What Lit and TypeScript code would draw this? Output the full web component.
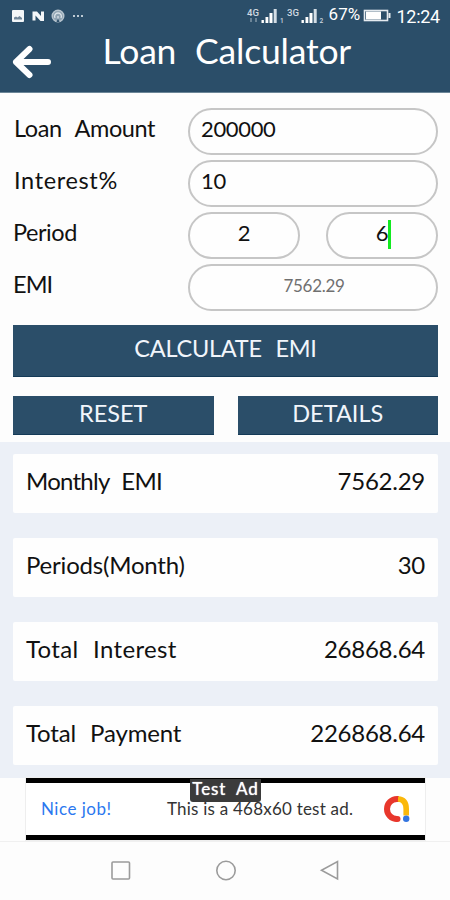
import { LitElement, html, css, svg } from "lit";
import { customElement } from "lit/decorators.js";

const results = [
  { label: "Monthly EMI", value: "7562.29", cls: "r1" },
  { label: "Periods(Month)", value: "30", cls: "r2" },
  { label: "Total Interest", value: "26868.64", cls: "r3" },
  { label: "Total Payment", value: "226868.64", cls: "r4" },
];

const signal = (x: number) => svg`
  <g fill="#fff">
    <rect x=${x} y="20" width="2.4" height="3"/>
    <rect x=${x + 4} y="17" width="2.8" height="6"/>
    <rect x=${x + 8} y="13" width="3" height="10"/>
    <rect x=${x + 12.2} y="9" width="3" height="14" fill="#d3dde5"/>
  </g>`;

@customElement("app-root")
export class AppRoot extends LitElement {
  static styles = css`
    :host { display: block; width: 450px; height: 900px; overflow: hidden; background: #fdfdfd;
      font-family: Lato, "Liberation Sans", sans-serif; color: #111; }
    * { box-sizing: border-box; }
    svg { display: block; }
    span, h1 { white-space: pre; }
    header { height: 93px; background: #2b4e69; border-bottom: 1px solid #6c8698; color: #fff; }
    .status { height: 30px; display: flex; position: relative; }
    .pct, .clock { position: absolute; line-height: 20px; font-family: Roboto, sans-serif; }
    .pct { left: 328.5px; top: 4px; font-size: 17px; letter-spacing: .1px; }
    .clock { left: 396.5px; top: 7px; font-size: 18px; letter-spacing: -.3px; }
    .bar { display: flex; height: 62px; padding-left: 12px; }
    .back { margin-top: 15px; width: 40px; height: 34px; }
    h1 { margin: 0 0 0 50.5px; font-weight: 400; font-size: 35.5px; line-height: 42px; letter-spacing: -.2px; word-spacing: 10px; }
    .form { padding: 15px 12px 0 13px; height: 232px; display: flex; flex-direction: column; gap: 5px; }
    .row { height: 47px; display: flex; }
    .lab { width: 175px; font-size: 23.5px; line-height: 41px; padding-left: 1px; }
    .amount { word-spacing: 8px; letter-spacing: -.4px; }
    .interest { letter-spacing: .65px; }
    .period { letter-spacing: -.45px; padding-left: 0; }
    .emi { letter-spacing: -.9px; padding-left: 0; }
    .field { flex: 1; height: 47px; border: 2px solid #c6c6c6; border-radius: 24px; background: #fefefe;
      font-size: 22px; line-height: 37px; padding-left: 11px; letter-spacing: -.35px; }
    .mid { text-align: center; padding: 0; }
    .pair { flex: 1; display: flex; gap: 26px; }
    .out { font-size: 17px; color: #707070; line-height: 39px; padding-left: 2px; letter-spacing: -.3px; }
    .caret { display: inline-block; width: 3px; height: 29px; background: #12ea20; vertical-align: -8px; margin-right: -3px; }
    .btns { padding: 0 12px 0 13px; height: 117px; display: flex; flex-direction: column; gap: 19px; }
    .btn { background: #2b4e69; color: #f1f5fb; text-align: center; flex: 1; height: 39px; font-size: 23.5px; line-height: 34px;
      border-bottom: 1px solid #143a57; }
    .big { flex: none; height: 52px; line-height: 47px; word-spacing: 8px; letter-spacing: -.25px; }
    .two { display: flex; gap: 24px; }
    .results { height: 336px; background: #ecf0f7; padding: 12px 12px 0 13px; display: flex; flex-direction: column; gap: 24.6px; }
    .card { height: 59.4px; background: #fefefe; border-radius: 2px; padding: 0 13px; display: flex; justify-content: space-between;
      font-size: 24px; line-height: 53px; }
    .r1 { word-spacing: 7px; letter-spacing: -.75px; }
    .r2 { letter-spacing: -.2px; }
    .r3 { word-spacing: 8px; letter-spacing: .35px; }
    .r4 { word-spacing: 8px; letter-spacing: -.15px; }
    .val { letter-spacing: -.25px; }
    .ad { width: 399px; height: 62px; margin-left: 26px; border: solid #000; border-width: 5px 0; display: flex; position: relative;
      background: #fff; box-shadow: 0 0 0 1px #eee; font-size: 17px; line-height: 52px; }
    .nice { color: #2b78ef; width: 141px; padding-left: 15px; letter-spacing: .5px; }
    .this { color: #333; width: 216px; letter-spacing: .22px; }
    .logo { margin-top: 12px; }
    .tag { position: absolute; left: 164px; top: -4px; width: 71px; height: 23px; background: #3b3b3b; border-radius: 0 0 3px 3px;
      color: #fff; font-size: 17px; line-height: 20px; text-align: center; word-spacing: 5px; letter-spacing: .9px;
      text-shadow: 0 0 1px #fff; }
    nav { height: 60px; margin-top: 1px; border-top: 1px solid #f0f0f0; background: #fdfdfd; }
  `;

  render() {
    return html`
      <header>
        <div class="status">
          <svg width="450" height="30" viewBox="0 0 450 30">
            <rect x="12" y="10" width="12" height="12" rx="1" fill="#f3f6f8"/>
            <path d="M14 19.500v-2l2-1 1.500 1 2-1.500 2.500 2v1.500z" fill="#71879a"/>
            <path d="M32.500 20.500V11.500h4.500l4 4.500v-4.500h3v9.500h-3.500l-5-5.500v5z" fill="#f3f6f8"/>
            <circle cx="58" cy="16" r="5.800" fill="#8fa3b2" stroke="#b7c4ce" stroke-width="1.400"/>
            <path d="M55 18a3.400 3.400 0 1 1 6 0M58 16v5" fill="none" stroke="#dbe3e9" stroke-width="1.300"/>
            <path d="M56.500 22l1.500-4 1.500 4z" fill="#2b4e69"/>
            <g fill="#bdcad4"><rect x="73" y="15" width="2" height="2"/><rect x="77" y="15" width="2" height="2"/><rect x="81" y="15" width="2" height="2"/></g>
            <g fill="#cfd9e1" font-family="Roboto, sans-serif" font-weight="500">
              <text x="247" y="15.500" font-size="8.500" textLength="12" lengthAdjust="spacingAndGlyphs">4G</text>
              <text x="287" y="15.500" font-size="8.500" textLength="12" lengthAdjust="spacingAndGlyphs">3G</text>
              <text x="280" y="23" font-size="6.500">1</text>
              <text x="319.500" y="23" font-size="6.500">2</text>
            </g>
            <path d="M251 18v4M256 18v4" stroke="#6b8497" stroke-width="2"/>
            ${signal(261.5)}${signal(301.5)}
            <rect x="364.500" y="10.500" width="23" height="10" fill="none" stroke="#e5ebf0" stroke-width="1.600"/>
            <rect x="366" y="11.500" width="15" height="8" fill="#fff"/>
            <rect x="388.500" y="13" width="2" height="5" fill="#e5ebf0"/>
          </svg>
          <span class="pct">67%</span><span class="clock">12:24</span>
        </div>
        <div class="bar">
          <svg class="back" viewBox="0 0 40 34" fill="none" stroke="#fff" stroke-width="6" stroke-linecap="round" stroke-linejoin="round">
            <path d="M36 17H4M17.500 4L4 17l13.500 13"/>
          </svg>
          <h1>Loan Calculator</h1>
        </div>
      </header>
      <section class="form">
        <div class="row"><span class="lab amount">Loan Amount</span><div class="field">200000</div></div>
        <div class="row"><span class="lab interest">Interest%</span><div class="field">10</div></div>
        <div class="row"><span class="lab period">Period</span>
          <div class="pair"><div class="field mid">2</div><div class="field mid">6<i class="caret"></i></div></div></div>
        <div class="row"><span class="lab emi">EMI</span><div class="field mid out">7562.29</div></div>
      </section>
      <section class="btns">
        <div class="btn big">CALCULATE EMI</div>
        <div class="two"><div class="btn">RESET</div><div class="btn">DETAILS</div></div>
      </section>
      <section class="results">
        ${results.map(r => html`<div class="card"><span class=${r.cls}>${r.label}</span><span class="val">${r.value}</span></div>`)}
      </section>
      <section class="ad">
        <span class="nice">Nice job!</span><span class="this">This is a 468x60 test ad.</span>
        <svg class="logo" width="28" height="28" viewBox="0 0 28 28" fill="none" stroke-width="6">
          <path d="M16 4H14A10 10 0 0 0 14 24" stroke="#e8372c"/>
          <circle cx="14.500" cy="24" r="3" fill="#e8372c" stroke="none"/>
          <path d="M15 4Q23.200 4.500 23.200 14V20.500" stroke="#fbb80a" stroke-width="5.600"/>
          <circle cx="23.200" cy="23.800" r="3.200" fill="#3375e0" stroke="none"/>
        </svg>
        <span class="tag">Test Ad</span>
      </section>
      <nav>
        <svg width="450" height="58" viewBox="0 842 450 58" fill="none" stroke="#9b9b9b" stroke-width="1.600">
          <rect x="112" y="862" width="17.500" height="17" rx="1"/>
          <circle cx="226" cy="870.500" r="9.200"/>
          <path d="M337.500 861.500v17.500L321.500 870.300z"/>
        </svg>
      </nav>`;
  }
}
